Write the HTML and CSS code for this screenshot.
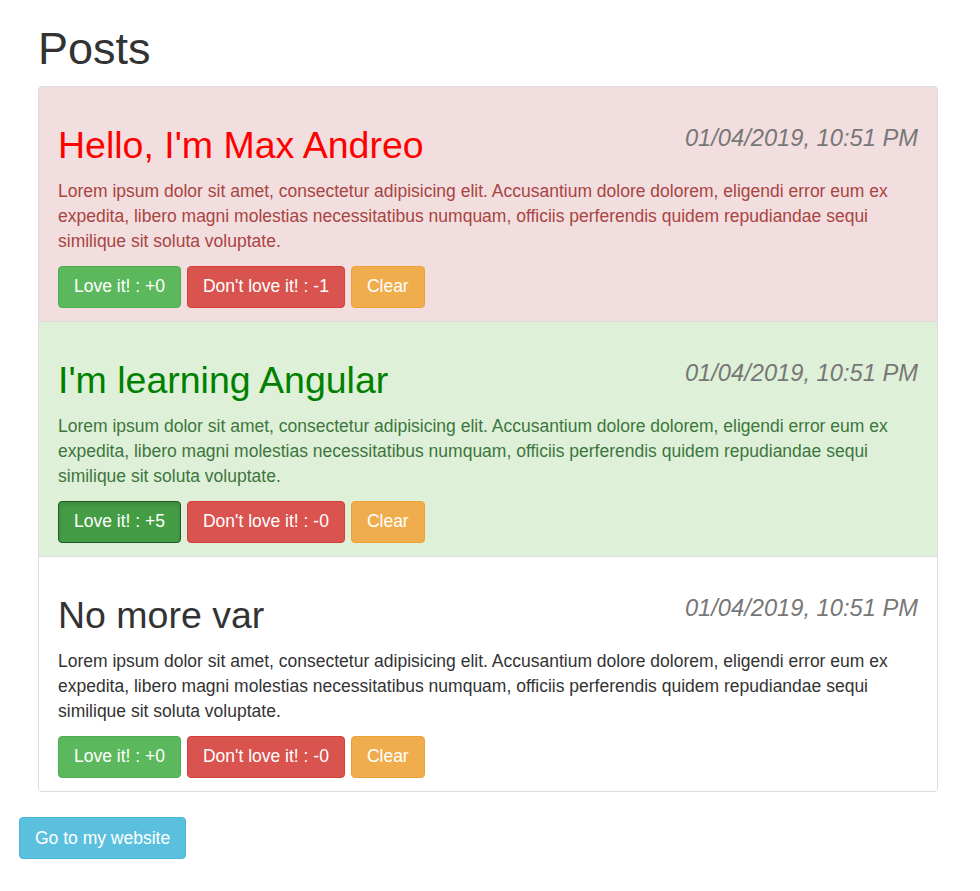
FILE: index.html
```html
<!DOCTYPE html>
<html lang="en">
<head>
<meta charset="utf-8">
<title>Posts</title>
<link rel="stylesheet" href="styles.css">
</head>
<body>
<div class="page">
  <section class="posts">
    <h1 class="page-title">Posts</h1>
    <ul class="post-list">
      <li class="post post-danger">
        <div class="post-head">
          <h2 class="post-title">Hello, I'm Max Andreo</h2>
          <span class="post-date">01/04/2019, 10:51 PM</span>
        </div>
        <p class="post-text">Lorem ipsum dolor sit amet, consectetur adipisicing elit. Accusantium dolore dolorem, eligendi error eum ex expedita, libero magni molestias necessitatibus numquam, officiis perferendis quidem repudiandae sequi similique sit soluta voluptate.</p>
        <div class="post-actions">
          <button class="btn btn-success">Love it! : +0</button>
          <button class="btn btn-danger">Don't love it! : -1</button>
          <button class="btn btn-warning">Clear</button>
        </div>
      </li>
      <li class="post post-success">
        <div class="post-head">
          <h2 class="post-title">I'm learning Angular</h2>
          <span class="post-date">01/04/2019, 10:51 PM</span>
        </div>
        <p class="post-text">Lorem ipsum dolor sit amet, consectetur adipisicing elit. Accusantium dolore dolorem, eligendi error eum ex expedita, libero magni molestias necessitatibus numquam, officiis perferendis quidem repudiandae sequi similique sit soluta voluptate.</p>
        <div class="post-actions">
          <button class="btn btn-success active">Love it! : +5</button>
          <button class="btn btn-danger">Don't love it! : -0</button>
          <button class="btn btn-warning">Clear</button>
        </div>
      </li>
      <li class="post">
        <div class="post-head">
          <h2 class="post-title">No more var</h2>
          <span class="post-date">01/04/2019, 10:51 PM</span>
        </div>
        <p class="post-text">Lorem ipsum dolor sit amet, consectetur adipisicing elit. Accusantium dolore dolorem, eligendi error eum ex expedita, libero magni molestias necessitatibus numquam, officiis perferendis quidem repudiandae sequi similique sit soluta voluptate.</p>
        <div class="post-actions">
          <button class="btn btn-success">Love it! : +0</button>
          <button class="btn btn-danger">Don't love it! : -0</button>
          <button class="btn btn-warning">Clear</button>
        </div>
      </li>
    </ul>
  </section>
  <button class="btn btn-info">Go to my website</button>
</div>
</body>
</html>
```

FILE: styles.css
```css
* { box-sizing: border-box; }
html, body { margin: 0; padding: 0; background: #fff; }
body {
  font-family: "Liberation Sans", Arial, Helvetica, sans-serif;
  font-size: 17.5px;
  line-height: 25px;
  color: #333;
}
.page {
  padding: 0 0 30px 19px;
}
.posts {
  margin-left: 19px;
  width: 900px;
}
.page-title {
  margin: 24px 0 12.5px;
  font-size: 45px;
  line-height: 49.5px;
  font-weight: 400;
  color: #333;
}
.post-list {
  list-style: none;
  margin: 0;
  padding: 0;
}
.post {
  border: 1px solid #ddd;
  background: #fff;
  margin-bottom: -1px;
  padding: 12.5px 19px 13.25px;
  color: #333;
}
.post:first-child { border-radius: 4px 4px 0 0; }
.post:last-child { border-radius: 0 0 4px 4px; margin-bottom: 0; }
.post-danger { background: #f2dede; color: #a94442; }
.post-success { background: #dff0d8; color: #3c763d; }
.post-head {
  display: flex;
  justify-content: space-between;
  align-items: flex-start;
  margin-top: 25px;
}
.post-title {
  margin: 0;
  font-size: 37.5px;
  line-height: 41.25px;
  font-weight: 400;
  color: #333;
}
.post-danger .post-title { color: #ff0000; }
.post-success .post-title { color: #008000; }
.post-date {
  font-style: italic;
  font-size: 23.7px;
  line-height: 26px;
  color: #777;
}
.post-text {
  margin: 13px 0 12px;
  line-height: 25px;
}
.post-actions {
  display: flex;
  gap: 6px;
}
.btn {
  font-family: inherit;
  font-size: 17.5px;
  line-height: 25px;
  padding: 7.5px 15px;
  border: 1px solid transparent;
  border-radius: 4px;
  color: #fff;
  cursor: pointer;
}
.btn-success { background: #5cb85c; border-color: #4cae4c; }
.btn-success.active {
  background: #449d44;
  border-color: #255625;
  box-shadow: inset 0 3px 5px rgba(0,0,0,.125);
}
.btn-danger { background: #d9534f; border-color: #d43f3a; }
.btn-warning { background: #f0ad4e; border-color: #eea236; }
.btn-info { background: #5bc0de; border-color: #46b8da; margin-top: 25px; }
```
